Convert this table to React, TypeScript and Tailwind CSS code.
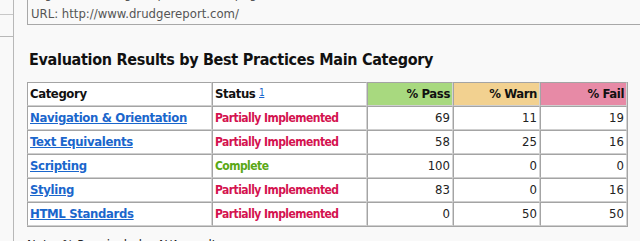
import React from "react";

const rows = [
  { cat: "Navigation & Orientation", status: "Partially Implemented", ok: false, p: 69, w: 11, f: 19 },
  { cat: "Text Equivalents", status: "Partially Implemented", ok: false, p: 58, w: 25, f: 16 },
  { cat: "Scripting", status: "Complete", ok: true, p: 100, w: 0, f: 0 },
  { cat: "Styling", status: "Partially Implemented", ok: false, p: 83, w: 0, f: 16 },
  { cat: "HTML Standards", status: "Partially Implemented", ok: false, p: 0, w: 50, f: 50 },
];

const cell = "h-[24px] border-t border-l border-t-[#a4a4a4] border-l-[#a4a4a4] border-b border-r border-b-[#cfcfcf] border-r-[#d4d4d4] px-[2px] py-0 align-middle";

export default function App() {
  return (
    <div
      className="w-[640px] h-[241px] overflow-hidden bg-[#f9f9f9] flex text-[13px] text-[#222]"
      style={{ fontFamily: '"DejaVu Sans Condensed", "DejaVu Sans", sans-serif' }}
    >
      <div className="w-[14px] shrink-0 border-r border-[#b8b8b8] flex flex-col">
        <div className="h-[15px] border-b border-[#c8c8c8]" />
        <div className="h-[22px] border-b border-[#b8b8b8]" />
      </div>
      <div className="flex-1 pl-[13px]">
        <div className="border-l border-b border-[#a8a8a8] h-[25px] overflow-hidden relative">
          <div className="absolute left-[3px] top-[-16px] leading-[20px] text-[#555] whitespace-nowrap">
            <div>Page Title: Drudge Report 2015® (page title)</div>
            <div>URL: http://www.drudgereport.com/</div>
          </div>
        </div>
        <h2 className="mt-[25px] text-[16px] font-bold text-[#111] leading-[19px] tracking-[-0.3px] whitespace-nowrap pl-[2px]">
          Evaluation Results by Best Practices Main Category
        </h2>
        <table className="mt-[13px] border-separate border-spacing-0 table-fixed bg-white border-r border-b border-[#a4a4a4]">
          <colgroup>
            <col className="w-[185px]" />
            <col className="w-[155px]" />
            <col className="w-[86px]" />
            <col className="w-[87px]" />
            <col className="w-[87px]" />
          </colgroup>
          <thead>
            <tr className="font-bold text-[#111]">
              <th className={cell + " text-left tracking-[-0.4px]"}>Category</th>
              <th className={cell + " text-left tracking-[-0.4px]"}>
                Status{" "}
                <sup className="text-[10px] font-normal text-[#1a66cc] underline relative top-[-2px]">1</sup>
              </th>
              <th className={cell + " text-right bg-[#a8d97f] tracking-[-0.4px]"}>% Pass</th>
              <th className={cell + " text-right bg-[#f2d190] tracking-[-0.4px]"}>% Warn</th>
              <th className={cell + " text-right bg-[#e78aa6] tracking-[-0.4px]"}>% Fail</th>
            </tr>
          </thead>
          <tbody>
            {rows.map((r) => (
              <tr key={r.cat}>
                <td className={cell + " font-bold tracking-[-0.35px]"}>
                  <a href="#" className="text-[#1a66cc] underline">{r.cat}</a>
                </td>
                <td
                  className={
                    cell +
                    " font-bold text-[12px] tracking-[-0.55px] " +
                    (r.ok ? "text-[#5aa816]" : "text-[#d4124f]")
                  }
                >
                  {r.status}
                </td>
                <td className={cell + " text-right"}>{r.p}</td>
                <td className={cell + " text-right"}>{r.w}</td>
                <td className={cell + " text-right"}>{r.f}</td>
              </tr>
            ))}
          </tbody>
        </table>
        <div className="mt-[8px] whitespace-nowrap">Note: % Pass includes N/A results</div>
      </div>
    </div>
  );
}
